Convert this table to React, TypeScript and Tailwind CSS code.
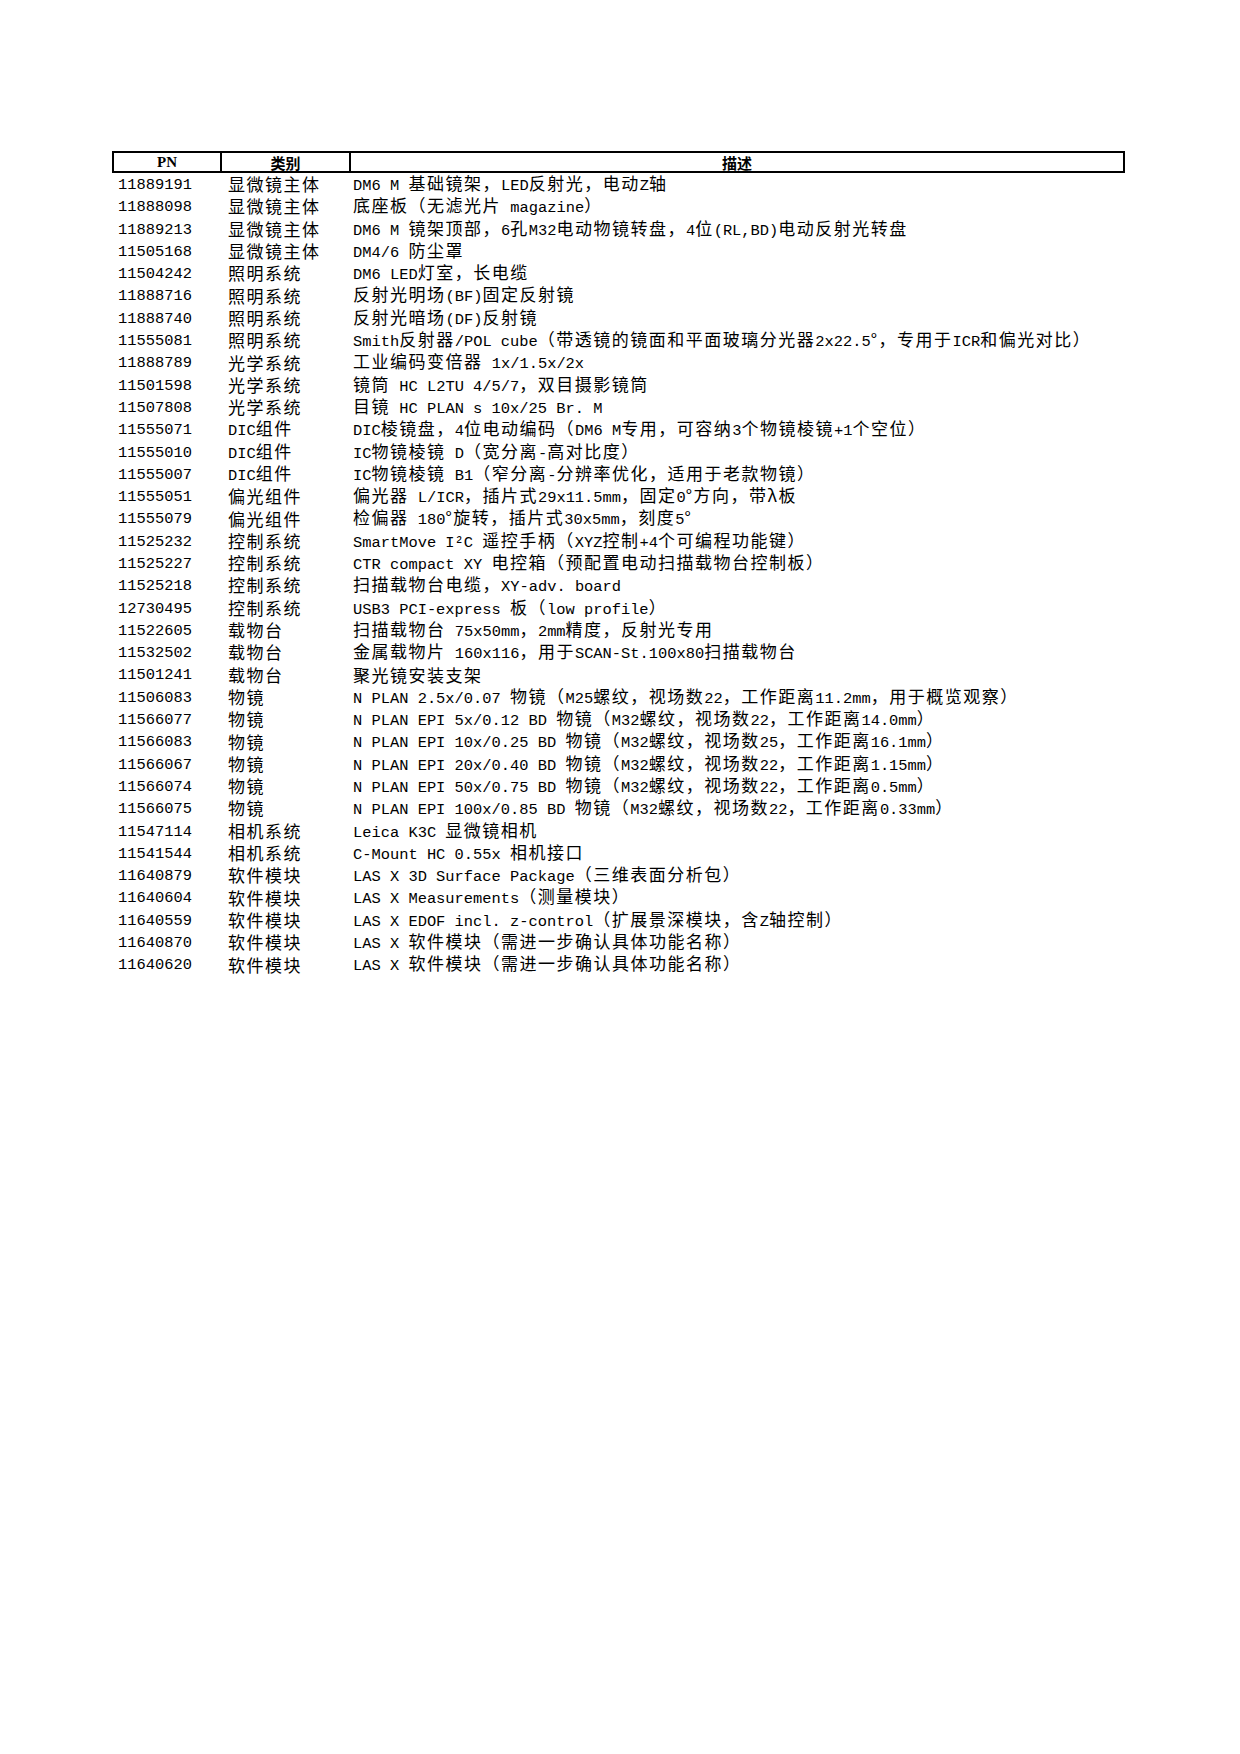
import React from "react";

type Row = { pn: string; cat: string; desc: string };

const rows: Row[] = [
  { pn: "11889191", cat: "显微镜主体", desc: "DM6 M 基础镜架，LED反射光，电动Z轴" },
  { pn: "11888098", cat: "显微镜主体", desc: "底座板（无滤光片 magazine）" },
  { pn: "11889213", cat: "显微镜主体", desc: "DM6 M 镜架顶部，6孔M32电动物镜转盘，4位(RL,BD)电动反射光转盘" },
  { pn: "11505168", cat: "显微镜主体", desc: "DM4/6 防尘罩" },
  { pn: "11504242", cat: "照明系统", desc: "DM6 LED灯室，长电缆" },
  { pn: "11888716", cat: "照明系统", desc: "反射光明场(BF)固定反射镜" },
  { pn: "11888740", cat: "照明系统", desc: "反射光暗场(DF)反射镜" },
  { pn: "11555081", cat: "照明系统", desc: "Smith反射器/POL cube（带透镜的镜面和平面玻璃分光器2x22.5°，专用于ICR和偏光对比）" },
  { pn: "11888789", cat: "光学系统", desc: "工业编码变倍器 1x/1.5x/2x" },
  { pn: "11501598", cat: "光学系统", desc: "镜筒 HC L2TU 4/5/7，双目摄影镜筒" },
  { pn: "11507808", cat: "光学系统", desc: "目镜 HC PLAN s 10x/25 Br. M" },
  { pn: "11555071", cat: "DIC组件", desc: "DIC棱镜盘，4位电动编码（DM6 M专用，可容纳3个物镜棱镜+1个空位）" },
  { pn: "11555010", cat: "DIC组件", desc: "IC物镜棱镜 D（宽分离-高对比度）" },
  { pn: "11555007", cat: "DIC组件", desc: "IC物镜棱镜 B1（窄分离-分辨率优化，适用于老款物镜）" },
  { pn: "11555051", cat: "偏光组件", desc: "偏光器 L/ICR，插片式29x11.5mm，固定0°方向，带λ板" },
  { pn: "11555079", cat: "偏光组件", desc: "检偏器 180°旋转，插片式30x5mm，刻度5°" },
  { pn: "11525232", cat: "控制系统", desc: "SmartMove I²C 遥控手柄（XYZ控制+4个可编程功能键）" },
  { pn: "11525227", cat: "控制系统", desc: "CTR compact XY 电控箱（预配置电动扫描载物台控制板）" },
  { pn: "11525218", cat: "控制系统", desc: "扫描载物台电缆，XY-adv. board" },
  { pn: "12730495", cat: "控制系统", desc: "USB3 PCI-express 板（low profile）" },
  { pn: "11522605", cat: "载物台", desc: "扫描载物台 75x50mm，2mm精度，反射光专用" },
  { pn: "11532502", cat: "载物台", desc: "金属载物片 160x116，用于SCAN-St.100x80扫描载物台" },
  { pn: "11501241", cat: "载物台", desc: "聚光镜安装支架" },
  { pn: "11506083", cat: "物镜", desc: "N PLAN 2.5x/0.07 物镜（M25螺纹，视场数22，工作距离11.2mm，用于概览观察）" },
  { pn: "11566077", cat: "物镜", desc: "N PLAN EPI 5x/0.12 BD 物镜（M32螺纹，视场数22，工作距离14.0mm）" },
  { pn: "11566083", cat: "物镜", desc: "N PLAN EPI 10x/0.25 BD 物镜（M32螺纹，视场数25，工作距离16.1mm）" },
  { pn: "11566067", cat: "物镜", desc: "N PLAN EPI 20x/0.40 BD 物镜（M32螺纹，视场数22，工作距离1.15mm）" },
  { pn: "11566074", cat: "物镜", desc: "N PLAN EPI 50x/0.75 BD 物镜（M32螺纹，视场数22，工作距离0.5mm）" },
  { pn: "11566075", cat: "物镜", desc: "N PLAN EPI 100x/0.85 BD 物镜（M32螺纹，视场数22，工作距离0.33mm）" },
  { pn: "11547114", cat: "相机系统", desc: "Leica K3C 显微镜相机" },
  { pn: "11541544", cat: "相机系统", desc: "C-Mount HC 0.55x 相机接口" },
  { pn: "11640879", cat: "软件模块", desc: "LAS X 3D Surface Package（三维表面分析包）" },
  { pn: "11640604", cat: "软件模块", desc: "LAS X Measurements（测量模块）" },
  { pn: "11640559", cat: "软件模块", desc: "LAS X EDOF incl. z-control（扩展景深模块，含Z轴控制）" },
  { pn: "11640870", cat: "软件模块", desc: "LAS X 软件模块（需进一步确认具体功能名称）" },
  { pn: "11640620", cat: "软件模块", desc: "LAS X 软件模块（需进一步确认具体功能名称）" },
];

// split into wide (CJK) and narrow runs so the widths follow the sheet
const isWide = (c: string) => /[\u3000-\u9fff\uff00-\uffefλ°]/.test(c);

const Mixed = ({ text }: { text: string }) => {
  const runs: { wide: boolean; s: string }[] = [];
  for (const ch of text) {
    const w = isWide(ch);
    const last = runs[runs.length - 1];
    if (last && last.wide === w) last.s += ch;
    else runs.push({ wide: w, s: ch });
  }
  return (
    <>
      {runs.map((r, i) =>
        r.wide ? (
          <span
            key={i}
            className="text-[17px] leading-none tracking-[1.5px] font-['Noto_Sans_CJK_SC',sans-serif]"
          >
            {r.s}
          </span>
        ) : (
          <span
            key={i}
            className="text-[15.4px] leading-none font-['Liberation_Mono','Noto_Sans_CJK_SC',monospace]"
          >
            {r.s}
          </span>
        )
      )}
    </>
  );
};

export default function App() {
  return (
    <div className="w-[1240px] min-h-[1754px] bg-white text-black pt-[151px] pl-[112px]">
      <div className="w-[1013px]">
        <div className="grid grid-cols-[108px_129px_1fr] h-[22px] border-2 border-black">
          <div className="border-r-2 border-black flex items-center justify-center font-bold text-[15px] leading-none font-['Liberation_Serif','Noto_Sans_CJK_SC',serif]">
            PN
          </div>
          <div className="border-r-2 border-black flex items-center justify-center font-bold text-[15px] leading-none font-['Noto_Sans_CJK_SC',sans-serif]">
            类别
          </div>
          <div className="flex items-center justify-center font-bold text-[15px] leading-none font-['Noto_Sans_CJK_SC',sans-serif]">
            描述
          </div>
        </div>
        {rows.map((r) => (
          <div
            key={r.pn + r.desc}
            className="grid grid-cols-[108px_129px_1fr] h-[22.3px] items-center leading-none whitespace-nowrap"
          >
            <div className="pl-[6px]">
              <Mixed text={r.pn} />
            </div>
            <div className="pl-[8px]">
              <Mixed text={r.cat} />
            </div>
            <div className="pl-[4px]">
              <Mixed text={r.desc} />
            </div>
          </div>
        ))}
      </div>
    </div>
  );
}
